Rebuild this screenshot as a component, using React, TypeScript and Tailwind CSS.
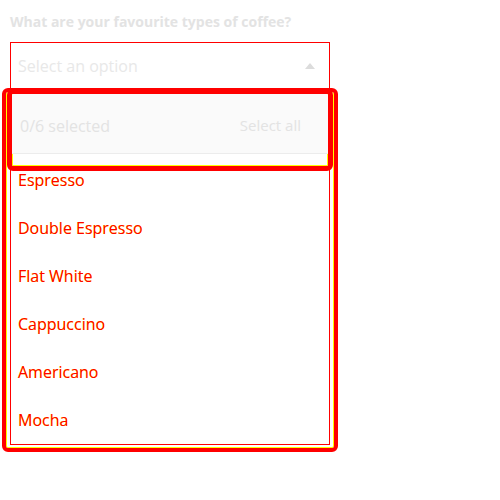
import React from "react";

const options = ["Espresso", "Double Espresso", "Flat White", "Cappuccino", "Americano", "Mocha"];

const App: React.FC = () => {
  return (
    <div className="w-[500px] h-[500px] bg-white font-['Open_Sans',sans-serif] pt-[12px]">
      {/* Label */}
      <div className="px-[10px] text-[14px] font-bold text-[#e3e3e3] leading-[20px]">
        What are your favourite types of coffee?
      </div>

      {/* Select */}
      <div className="mx-[10px] mt-[10px] w-[320px] h-[48px] border border-[#ff0000] flex items-center justify-between pl-[7px] pr-[14px]">
        <span className="text-[16px] text-[#e8e8e8]">Select an option</span>
        <svg width="10" height="6" viewBox="0 0 10 6">
          <path d="M0 6 L5 0 L10 6 Z" fill="#dcdcdc" />
        </svg>
      </div>

      {/* Dropdown panel */}
      <div className="relative mx-[2px] -mt-[2px] w-[336px] rounded-[6px] border-[4px] border-[#ff0000] shadow-[inset_0_0_0_1px_#ffff00] pb-[3px]">
        {/* Header */}
        <div className="absolute left-[1px] right-[1px] -top-[3px] h-[82px] rounded-[6px] border-[5px] border-[#ff0000] shadow-[inset_0_0_0_1px_#ffff00] bg-white overflow-hidden z-10">
          <div className="h-[60px] bg-[#fafafa] border-b border-[#ececec] flex items-center justify-between pl-[8px] pr-[27px] pt-[4px]">
            <span className="text-[16px] text-[#e3e3e3]">0/6 selected</span>
            <span className="text-[15px] text-[#e3e3e3]">Select all</span>
          </div>
        </div>

        {/* List */}
        <div className="ml-[4px] w-[320px] pt-[64px] border-x border-b border-[#ff0000] flex flex-col pl-[7px]">
          {options.map((o) => (
            <div
              key={o}
              className="h-[48px] shrink-0 flex items-center text-[16px] text-[#ff0000] [text-shadow:0_0_0.6px_#ffff00]"
            >
              {o}
            </div>
          ))}
        </div>
      </div>
    </div>
  );
};

export default App;
